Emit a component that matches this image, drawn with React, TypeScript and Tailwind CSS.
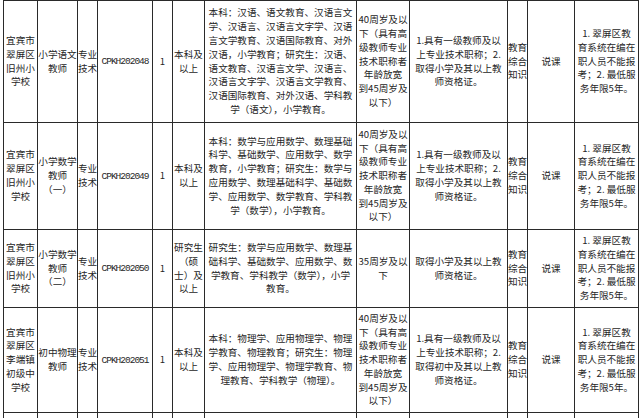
import React from 'react';

type Row = {
  school: string[];
  post: string[];
  code: string;
  edu: string[];
  major: string[];
  age: string[];
  qual: string[];
  h: string;
};

const AGE_40 = ['40周岁及以', '下（具有高', '级教师专业', '技术职称者', '年龄放宽', '到45周岁及', '以下）'];
const QUAL_XX = ['1.具有一级教师及以', '上专业技术职称；2.', '取得小学及其以上教', '师资格证。'];
const NOTE = ['1. 翠屏区教', '育系统在编在', '职人员不能报', '考；2. 最低服', '务年限5年。'];

const rows: Row[] = [
  {
    school: ['宜宾市', '翠屏区', '旧州小', '学校'],
    post: ['小学语文', '教师'],
    code: 'CPKH202048',
    edu: ['本科及', '以上'],
    major: [
      '本科：汉语、语文教育、汉语言文',
      '学、汉语言、汉语言文字学、汉语',
      '言文学教育、汉语国际教育、对外',
      '汉语，小学教育；研究生：汉语、',
      '语文教育、汉语言文学、汉语言、',
      '汉语言文字学、汉语言文学教育、',
      '汉语国际教育、对外汉语、学科教',
      '学（语文），小学教育。',
    ],
    age: AGE_40,
    qual: QUAL_XX,
    h: 'h-[122px]',
  },
  {
    school: ['宜宾市', '翠屏区', '旧州小', '学校'],
    post: ['小学数学', '教师', '（一）'],
    code: 'CPKH202049',
    edu: ['本科及', '以上'],
    major: [
      '本科：数学与应用数学、数理基础',
      '科学、基础数学、应用数学、数学',
      '教育，小学教育；研究生：数学与',
      '应用数学、数理基础科学、基础数',
      '学、应用数学、数学教育、学科教',
      '学（数学），小学教育。',
    ],
    age: AGE_40,
    qual: QUAL_XX,
    h: 'h-[107px]',
  },
  {
    school: ['宜宾市', '翠屏区', '旧州小', '学校'],
    post: ['小学数学', '教师', '（二）'],
    code: 'CPKH202050',
    edu: ['研究生', '（硕', '士）及', '以上'],
    major: [
      '研究生：数学与应用数学、数理基',
      '础科学、基础数学、应用数学、数',
      '学教育、学科教学（数学），小学',
      '教育。',
    ],
    age: ['35周岁及以', '下'],
    qual: ['取得小学及其以上教', '师资格证。'],
    h: 'h-[78px]',
  },
  {
    school: ['宜宾市', '翠屏区', '李端镇', '初级中', '学校'],
    post: ['初中物理', '教师'],
    code: 'CPKH202051',
    edu: ['本科及', '以上'],
    major: [
      '本科：物理学、应用物理学、物理',
      '学教育、物理教育；研究生：物理',
      '学、应用物理学、物理学教育、物',
      '理教育、学科教学（物理）。',
    ],
    age: AGE_40,
    qual: ['1.具有一级教师及以', '上专业技术职称；2.', '取得初中及其以上教', '师资格证。'],
    h: 'h-[105px]',
  },
];

function Lines({ items }: { items: string[] }) {
  return (
    <>
      {items.map((t, i) => (
        <div key={i} className="whitespace-nowrap">
          {t}
        </div>
      ))}
    </>
  );
}

const td = 'border border-[#2a2a2a] p-0 text-center align-middle';

export default function App() {
  return (
    <div
      className="w-[640px] h-[418px] overflow-hidden bg-white text-[#262626] text-[9.6px] leading-[13.8px] pl-[3px]"
      style={{ fontFamily: '"Noto Sans CJK SC", "Noto Sans", sans-serif' }}
    >
      <table className="table-fixed border-collapse w-[635px]">
        <colgroup>
          <col className="w-[34px]" />
          <col className="w-[40px]" />
          <col className="w-[20px]" />
          <col className="w-[55px]" />
          <col className="w-[20px]" />
          <col className="w-[32px]" />
          <col className="w-[152px]" />
          <col className="w-[53px]" />
          <col className="w-[98px]" />
          <col className="w-[20px]" />
          <col className="w-[47px]" />
          <col className="w-[64px]" />
        </colgroup>
        <tbody>
          {rows.map((r) => (
            <tr key={r.code} className={r.h}>
              <td className={td}>
                <Lines items={r.school} />
              </td>
              <td className={td}>
                <Lines items={r.post} />
              </td>
              <td className={td}>
                <Lines items={['专业', '技术']} />
              </td>
              <td className={td}>
                <span
                  className="tracking-[-1px] text-[9.5px]"
                  style={{ fontFamily: '"Liberation Mono", monospace' }}
                >
                  {r.code}
                </span>
              </td>
              <td className={td}>1</td>
              <td className={td}>
                <Lines items={r.edu} />
              </td>
              <td className={td + ' px-[2px]'}>
                <Lines items={r.major} />
              </td>
              <td className={td}>
                <Lines items={r.age} />
              </td>
              <td className={td}>
                <Lines items={r.qual} />
              </td>
              <td className={td}>
                <Lines items={['教育', '综合', '知识']} />
              </td>
              <td className={td}>说课</td>
              <td className={td}>
                <Lines items={NOTE} />
              </td>
            </tr>
          ))}
          <tr className="h-[40px]">
            {Array.from({ length: 12 }).map((_, i) => (
              <td key={i} className={td}></td>
            ))}
          </tr>
        </tbody>
      </table>
    </div>
  );
}
